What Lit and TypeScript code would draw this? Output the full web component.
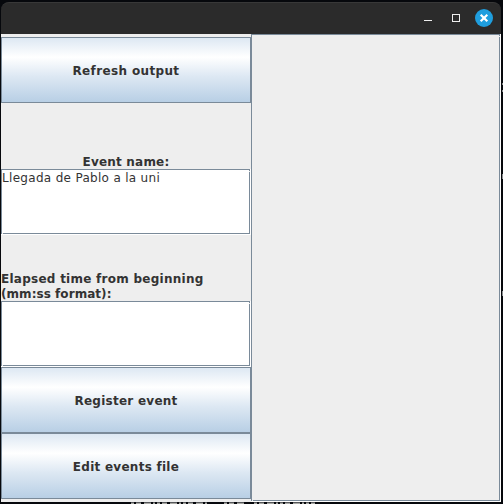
import { LitElement, html, css } from "lit";
import { customElement, property } from "lit/decorators.js";

@customElement("metal-button")
class MetalButton extends LitElement {
  static styles = css`
    :host { display: block; }
    .face {
      box-sizing: border-box; width: 100%; height: 100%; display: block; margin: 0; padding: 2px 0 0;
      border: 1px solid #7a8a99; border-radius: 0;
      background: linear-gradient(#dde8f3, #fff 30%, #dde8f3 60%, #b8cfe5);
      color: #333; font: bold 12px/16px "DejaVu Sans", sans-serif; letter-spacing: inherit;
    }
  `;
  render() { return html`<button class="face"><slot></slot></button>`; }
}

@customElement("metal-area")
class MetalArea extends LitElement {
  @property() value = "";
  static styles = css`
    :host { display: block; box-sizing: border-box; border: solid #fff; border-width: 0 1px 1px 0; }
    .area {
      box-sizing: border-box; height: 100%; border: 1px solid #7a8a99; background: #fff; position: relative;
      color: #333; font: 12px/17px "DejaVu Sans", sans-serif; letter-spacing: 0.31px; white-space: pre;
    }
    .area::before, .area::after { content: ""; position: absolute; width: 1px; height: 1px; background: #eee; }
    .area::before { right: -1px; top: 1px; }
    .area::after { left: 0; bottom: -1px; }
  `;
  render() { return html`<div class="area">${this.value}</div>`; }
}

@customElement("app-root")
class AppRoot extends LitElement {
  static styles = css`
    :host { display: block; width: 503px; height: 504px; overflow: hidden; background: #06080c; position: relative; }
    .window { margin-left: 1px; padding-top: 2px; width: 500px; height: 500px; display: flex; flex-direction: column; }
    .title {
      box-sizing: border-box; flex: 0 0 32px; background: #2b2b2b; border-top: 1px solid #383838;
      border-radius: 8px 8px 0 0; display: flex; justify-content: flex-end; padding-right: 7px;
    }
    .controls { display: block; width: 80px; height: 30px; }
    .body { flex: 1; display: flex; background: #eee; }
    .form { width: 250px; box-sizing: border-box; padding: 3px 0; display: grid; grid-template-rows: repeat(7, 66px); }
    .label { display: flex; flex-direction: column; justify-content: flex-end; color: #333; font: bold 12px/15px "DejaVu Sans", sans-serif; }
    .label span:last-child { margin-bottom: -1px; }
    .center { align-items: center; }
    .s5 { letter-spacing: 0.05px; }
    .s20 { letter-spacing: 0.2px; }
    .s26 { letter-spacing: 0.26px; }
    .s36 { letter-spacing: 0.36px; }
    .output { flex: 1; box-sizing: border-box; border: solid #fff; border-width: 0 1px 1px 0; display: flex; }
    .view { flex: 1; border: 1px solid #7a8a99; position: relative; }
    .view::before, .view::after { content: ""; position: absolute; width: 1px; height: 1px; background: #eee; }
    .view::before { right: -1px; top: 1px; }
    .view::after { left: 0; bottom: -1px; }
    .behind { position: absolute; left: 0; top: 0; width: 503px; height: 504px; pointer-events: none; }
  `;
  render() {
    return html`
      <div class="window">
        <div class="title">
          <svg class="controls" viewBox="0 0 80 30">
            <path d="M10 17.5h8" stroke="#eee" />
            <rect x="38.5" y="11.5" width="7" height="7" fill="none" stroke="#eee" />
            <circle cx="70" cy="15" r="9" fill="#1f9ede" />
            <path d="M66.7 11.7l6.6 6.6m0-6.6l-6.6 6.6" stroke="#fff" stroke-width="2.2" />
          </svg>
        </div>
        <div class="body">
          <div class="form">
            <metal-button class="s36">Refresh output</metal-button>
            <div class="label center s20"><span>Event name:</span></div>
            <metal-area value="Llegada de Pablo a la uni"></metal-area>
            <div class="label">
              <span class="s26">Elapsed time from beginning</span>
              <span class="s5">(mm:ss format):</span>
            </div>
            <metal-area></metal-area>
            <metal-button class="s26">Register event</metal-button>
            <metal-button class="s26">Edit events file</metal-button>
          </div>
          <div class="output"><div class="view"></div></div>
        </div>
      </div>
      <svg class="behind" viewBox="0 0 503 504">
        <path d="M131 503.5H209M224 503.5H245M254 503.5H315" stroke="#a9a9a5" stroke-dasharray="3 2 5 3 7 2 2 2" />
        <path d="M131 502.5H209M224 502.5H245M254 502.5H315" stroke="#55575a" stroke-dasharray="3 2 5 3 7 2 2 2" />
        <path d="M502.5 83v2M502.5 90v2M502.5 174v5M502.5 291v5" stroke="#8b8d8f" />
      </svg>
    `;
  }
}
